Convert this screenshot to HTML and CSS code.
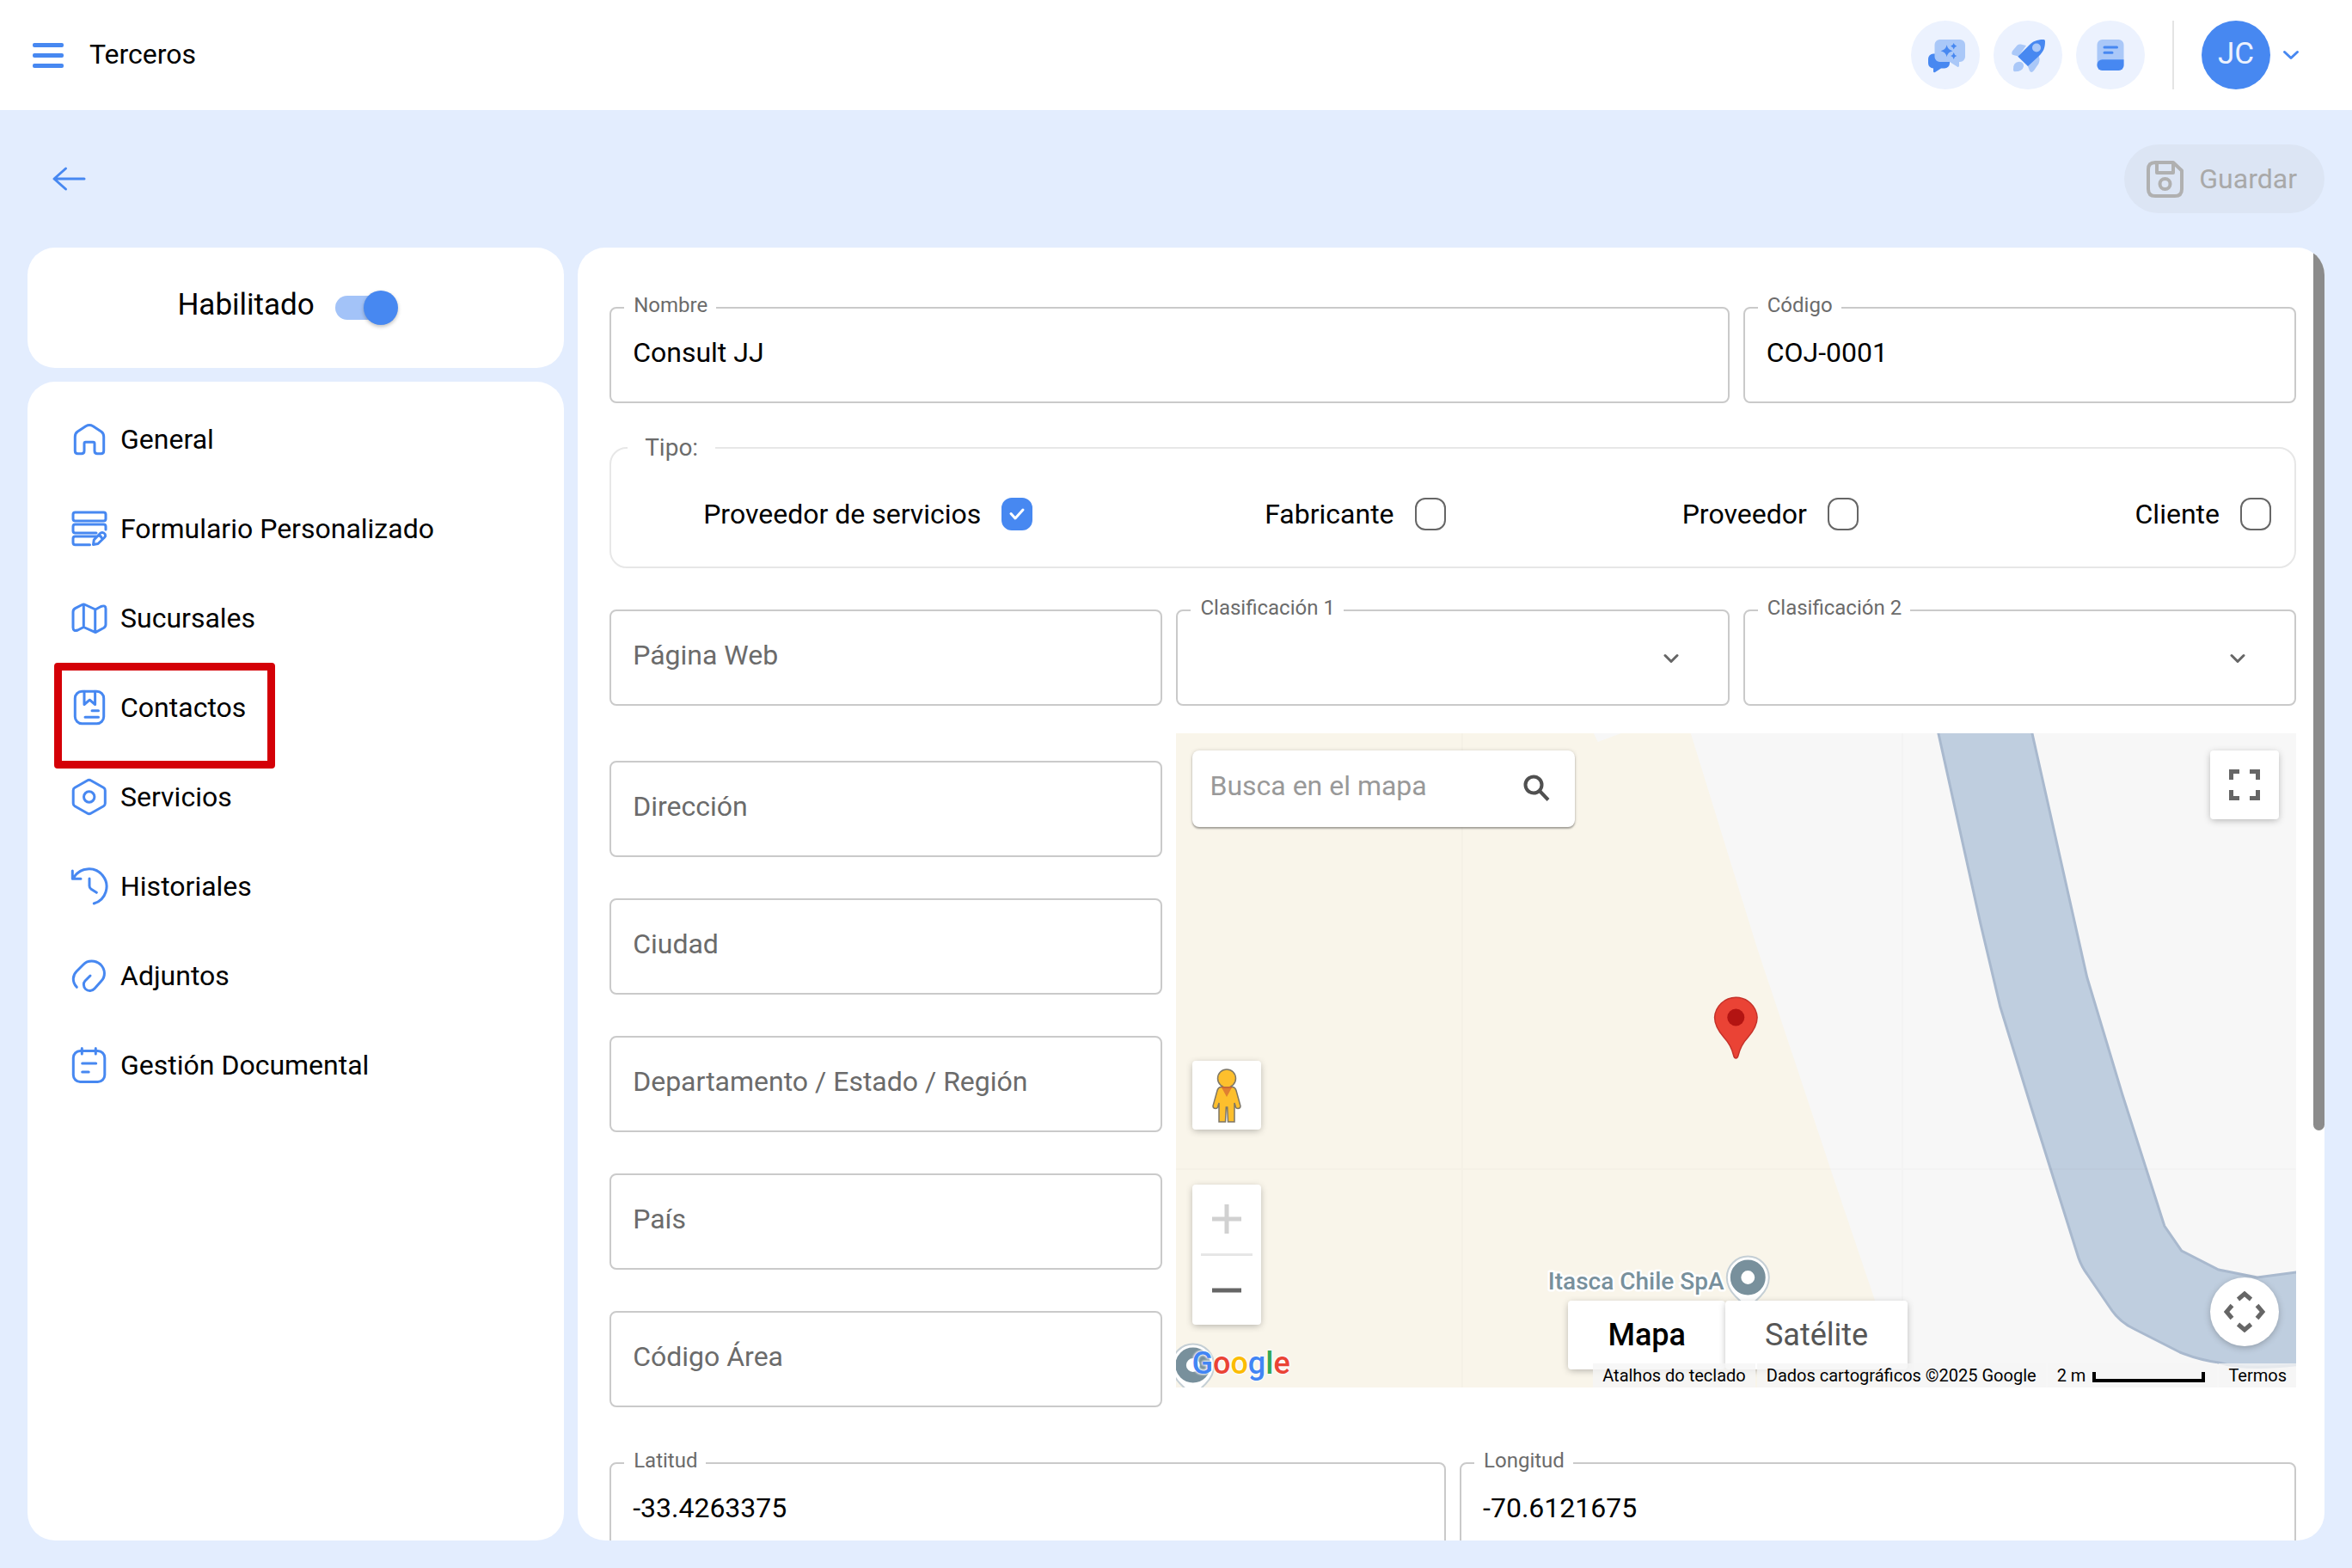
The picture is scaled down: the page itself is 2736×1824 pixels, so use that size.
FILE: index.html
```html
<!DOCTYPE html>
<html lang="es">
<head>
	<meta charset="utf-8">
	<title>Terceros</title>
	<link rel="stylesheet" href="styles.css">
</head>
<body>

<header class="topbar">
	<button class="menu-btn" aria-label="Menú"><span></span><span></span><span></span></button>
	<h1 class="title">Terceros</h1>
	<div class="actions">
		<button class="round" aria-label="Asistente">
			<svg viewBox="0 0 80 80">
				<path class="dark" d="M26 38.5h13a6 6 0 0 1 6 6v5a6 6 0 0 1-6 6h-4l-7 4.6q-2 .8-2-1.300v-3.300a6 6 0 0 1-6-6v-5a6 6 0 0 1 6-6z"/>
				<path class="light" d="M33.500 22h23.500a6 6 0 0 1 6 6v14a6 6 0 0 1-6 6h-1v4.500q-.3 2-2 1.300L45 48H33.500a6 6 0 0 1-6-6V28a6 6 0 0 1 6-6z"/>
				<path class="dark" d="M41.600 28.300q1.200 5.800 7 7-5.800 1.200-7 7-1.200-5.800-7-7 5.800-1.200 7-7zM49.700 26q.7 3 3.600 3.700-2.900.7-3.600 3.700-.7-3-3.600-3.700 2.900-.7 3.600-3.700zM49.700 37q.7 3.300 3.600 4-2.900.7-3.600 4-.7-3.300-3.600-4 2.900-.7 3.600-4z"/>
			</svg>
		</button>
		<button class="round" aria-label="Novedades">
			<svg viewBox="0 0 80 80">
				<path class="light" d="M38 29l-6.500-1.600q-2.500-.2-4 1.300l-5.500 6.500q-2 4 1 4.800l6 1.500zM52.500 40.500l1 4q.3 3-1 5.500l-5.500 8q-3 3.500-5 .5L39.500 52zM23 57q-.5-9 7-9.200 5.500.7 5 5.500-1 6-10.500 6-1.500 0-1.500-2.300z"/>
				<path class="dark" d="M58 22q2-.3 2 2c0 8-2 12-7 17L40 53 28.300 41.800 41 29c5-5 9-7 17-7z"/>
				<circle class="light" cx="50" cy="31.500" r="5"/>
			</svg>
		</button>
		<button class="round" aria-label="Manual">
			<svg viewBox="0 0 80 80">
				<rect class="light" x="24.500" y="22" width="31" height="36" rx="6"/>
				<path class="dark" d="M30.500 45.300h25V52a6 6 0 0 1-6 6h-19a6 6 0 0 1-6-6v-.7a6 6 0 0 1 6-6z"/>
				<path class="dark-line" d="M33 31h14.500M33 37.300h9"/>
			</svg>
		</button>
		<span class="divider"></span>
		<button class="user" aria-label="Cuenta">
			<span class="avatar">JC</span>
			<svg class="chevron" viewBox="0 0 32 32"><path d="M8.500 12.500l7.500 7 7.500-7"/></svg>
		</button>
	</div>
</header>

<main class="page">
	<div class="toolbar">
		<a class="back" href="#" aria-label="Volver">
			<svg viewBox="0 0 40 32"><path d="M3 16h35M16.500 4L3 16l13.500 12"/></svg>
		</a>
		<button class="save" disabled>
			<svg viewBox="0 0 43 43">
				<path d="M10 2h21l10 9.500V33q0 8-8 8H10q-8 0-8-8V10q0-8 8-8zM12 2v12h19V2"/>
				<circle cx="21.500" cy="27" r="6"/>
			</svg>
			Guardar
		</button>
	</div>

	<div class="columns">
		<aside class="side">
			<section class="card state">
				<label for="habilitado">Habilitado</label>
				<input type="checkbox" id="habilitado" class="switch" checked>
			</section>
			<nav class="card menu">
				<a href="#">
					<svg viewBox="0 0 48 48"><path d="M7.300 21q0-4 3-6l9.500-6.300q4.200-2.400 8.400 0l9.500 6.300q3 2 3 6v16.500q0 3.200-3.200 3.200h-4.300q-3.200 0-3.200-3.200V29q0-1.700-1.700-1.700h-8.600q-1.700 0-1.700 1.700v8.500q0 3.200-3.200 3.200h-4.300q-3.200 0-3.200-3.200z"/></svg>
					General
				</a>
				<a href="#">
					<svg viewBox="0 0 48 48"><rect x="5" y="5" width="38" height="10" rx="2.500"/><path d="M43 25v-3.500q0-2.500-2.500-2.500h-33Q5 19 5 21.500v5Q5 29 7.500 29H32M32 33H7.500Q5 33 5 35.500v4.700q0 2.500 2.500 2.500h17M28.500 42.500l.8-5.500 7.700-8q3.200-1.500 5.300 1.500.8 2-.6 3.500L34 41.500zM35 31.500q2.500 1 3.800 4"/></svg>
					Formulario Personalizado
				</a>
				<a href="#">
					<svg viewBox="0 0 48 48"><path d="M5 17q0-3 2.500-4.300L15.500 8.500q1.800-.8 3.600 0L31 14l6.500-3.500q5.500-2 5.500 2.500v18.500q0 2.500-2.500 4L31 40.600 17.300 34.500 10.500 38Q5 40 5 35zM17.300 8.500v26M30.700 14v26.500"/></svg>
					Sucursales
				</a>
				<a href="#" class="marked">
					<svg viewBox="0 0 48 48"><rect x="7.300" y="5.300" width="33.400" height="37.400" rx="8"/><path d="M18 5.300v15.200l6.300-5.300 6.300 5.300V5.300M27 27.700h7.500M19 35.300h15.500"/></svg>
					Contactos
				</a>
				<a href="#">
					<svg viewBox="0 0 48 48"><path d="M21.500 5q2.200-1.500 4.400 0l14.600 8.300q1.800 1 1.800 3.200v15q0 2.200-1.800 3.200L25.900 43q-2.200 1.500-4.400 0L7 34.700q-1.800-1-1.800-3.200v-15q0-2.200 1.800-3.200z"/><circle cx="23.700" cy="24" r="6.200"/></svg>
					Servicios
				</a>
				<a href="#">
					<svg viewBox="0 0 48 48"><path d="M5.500 14.500A20.500 20.500 0 1 1 29.300 44M4.300 6v9.300H14M24 15v8.500q0 2.500 2 3.800l6.300 4"/></svg>
					Historiales
				</a>
				<a href="#">
					<svg viewBox="0 0 48 48"><path d="M9.300 37.300C3.500 31 4.500 23.500 9 19l8-8c5-5.200 14-5.200 20 0 6 6 5.500 14.500 1 19l-8 9c-2.500 3-7.500 3.300-10.500.5-2.800-2.800-2.700-7.200-.5-9.500l6-6"/></svg>
					Adjuntos
				</a>
				<a href="#">
					<svg viewBox="0 0 48 48"><rect x="5.300" y="7.500" width="36.500" height="36" rx="8"/><path d="M15.300 4.500v6.500M31.300 4.500v6.500M15.700 22h16M15.700 32h7.500"/></svg>
					Gestión Documental
				</a>
			</nav>
		</aside>

		<section class="card panel">
			<form class="grid">
				<div class="field wide">
					<label for="nombre">Nombre</label>
					<input type="text" id="nombre" value="Consult JJ">
				</div>
				<div class="field">
					<label for="codigo">Código</label>
					<input type="text" id="codigo" value="COJ-0001">
				</div>

				<fieldset class="types">
					<legend>Tipo:</legend>
					<div class="options">
						<label>Proveedor de servicios <span class="tick"><input type="checkbox" checked><svg viewBox="0 0 36 36"><path d="M11 18.500l5 5.500 9-10"/></svg></span></label>
						<label>Fabricante <span class="tick"><input type="checkbox"></span></label>
						<label>Proveedor <span class="tick"><input type="checkbox"></span></label>
						<label>Cliente <span class="tick"><input type="checkbox"></span></label>
					</div>
				</fieldset>

				<div class="field">
					<input type="text" placeholder="Página Web" aria-label="Página Web">
				</div>
				<div class="field">
					<label for="clas1">Clasificación 1</label>
					<select id="clas1"></select>
					<svg class="arrow" viewBox="0 0 32 32"><path d="M9 12.500l7 7 7-7"/></svg>
				</div>
				<div class="field">
					<label for="clas2">Clasificación 2</label>
					<select id="clas2"></select>
					<svg class="arrow" viewBox="0 0 32 32"><path d="M9 12.500l7 7 7-7"/></svg>
				</div>

				<div class="address">
					<div class="field"><input type="text" placeholder="Dirección" aria-label="Dirección"></div>
					<div class="field"><input type="text" placeholder="Ciudad" aria-label="Ciudad"></div>
					<div class="field"><input type="text" placeholder="Departamento / Estado / Región" aria-label="Departamento / Estado / Región"></div>
					<div class="field"><input type="text" placeholder="País" aria-label="País"></div>
					<div class="field"><input type="text" placeholder="Código Área" aria-label="Código Área"></div>
				</div>

				<div class="map">
					<svg class="tiles" viewBox="0 0 1303 761" preserveAspectRatio="xMidYMid slice">
						<rect width="1303" height="761" fill="#f7f7f7"/>
						<path fill="#f9f5ea" d="M0 0H599L675 246 762 508 813 659 847 761H0z"/>
						<path fill="#f7f7f7" d="M486 0h32l-27 10z"/>
						<!-- river -->
						<path fill="#bfcedf" stroke="#a9b9ce" stroke-width="3" d="M886-5L936 221 959 318 995 435 1050 610Q1054 621 1060 629L1088 670Q1098 685 1115 693L1168 720Q1190 729 1213 732 1245 742 1310 734V626L1258 633 1213 624 1170 602 1150 573 1101 420 1060 284 995-5z"/>
						<!-- tile seams -->
						<path stroke="#000" stroke-opacity=".015" stroke-width="2" d="M333 0v761M845 0v761M0 507h1303"/>
						<!-- places -->
						<g>
							<path fill="#fff" stroke="#c5cfd5" stroke-width="2" d="M641 633a24.500 24.500 0 1 1 49 0q0 12-10 22l-14.500 14-14.500-14q-10-10-10-22z"/>
							<circle cx="665.500" cy="633" r="14.200" fill="#fff" stroke="#78909c" stroke-width="12.500"/>
							<path fill="#fff" stroke="#c5cfd5" stroke-width="2" d="M-4.500 735a24.500 24.500 0 1 1 49 0q0 12-10 22l-14.500 14-14.500-14q-10-10-10-22z"/>
							<circle cx="20" cy="735" r="14.200" fill="#fff" stroke="#78909c" stroke-width="12.500"/>
							<text class="place" x="433" y="647">Itasca Chile SpA</text>
						</g>
						<g>
							<path fill="#ea4335" stroke="#c5322a" stroke-width="1.500" d="M651.500 378q-2 0-2.700-3.500-3-12-11-20.500-11-12.500-11-23.500a24.800 24.800 0 0 1 49.500 0q0 11-11 23.500-8 8.500-11 20.500-.8 3.500-2.800 3.500z"/>
							<circle cx="651.500" cy="330.500" r="10" fill="#b31412"/>
						</g>
					</svg>

					<div class="search">
						<input type="text" placeholder="Busca en el mapa" aria-label="Busca en el mapa">
						<svg viewBox="0 0 32 32"><circle cx="12" cy="12" r="9.500"/><path d="M19 19l10 10.500"/></svg>
					</div>

					<button type="button" class="ctl fullscreen" aria-label="Pantalla completa">
						<svg viewBox="0 0 36 36"><path d="M2.500 12V2.500H12M24 2.500h9.500V12M33.500 24v9.500H24M12 33.500H2.500V24"/></svg>
					</button>

					<button type="button" class="ctl pegman" aria-label="Street View">
						<svg viewBox="0 0 36 63">
							<path fill="#fdbf2d" stroke="#7d7666" stroke-width="1.500" d="M11 21.500q-3 .5-4 4l-5 18q0 3 3 3 2 0 2.500-1.500l1.500-5V62h7.500l.8-17h1.400l.8 17H27V40l1.500 5q.5 1.500 2.500 1.500 3 0 3-3l-5-18q-1-3.500-4-4z"/>
							<path fill="#e07f31" d="M12 22h12l-6 11z"/>
							<circle cx="18" cy="11.500" r="10.500" fill="#fdbf2d" stroke="#7d7666" stroke-width="1.500"/>
							<path stroke="#d9622b" stroke-width="1.500" d="M12 22h12"/>
						</svg>
					</button>

					<div class="ctl zoom">
						<button type="button" aria-label="Acercar" disabled><svg viewBox="0 0 34 34"><path d="M17 0v34M0 17h34"/></svg></button>
						<button type="button" aria-label="Alejar"><svg viewBox="0 0 34 34"><path d="M0 17h34"/></svg></button>
					</div>

					<button type="button" class="ctl rotate" aria-label="Mover la cámara">
						<svg viewBox="0 0 48 48"><path d="M16.500 9.500L24 3l7.500 6.500M16.500 38.500L24 45l7.500-6.500M9.500 16.500L3 24l6.500 7.500M38.500 16.500L45 24l-6.500 7.500"/></svg>
					</button>

					<div class="maptype">
						<button type="button" class="on">Mapa</button>
						<button type="button">Satélite</button>
					</div>

					<a class="google" href="#"><span class="b">G</span><span class="r">o</span><span class="y">o</span><span class="b">g</span><span class="g">l</span><span class="r">e</span></a>

					<div class="legal">
						<button type="button">Atalhos do teclado</button>
						<span>Dados cartográficos ©2025 Google</span>
						<span class="scale">2 m <i></i></span>
						<a href="#">Termos</a>
					</div>
				</div>

				<div class="coords">
					<div class="field">
						<label for="latitud">Latitud</label>
						<input type="text" id="latitud" value="-33.4263375">
					</div>
					<div class="field">
						<label for="longitud">Longitud</label>
						<input type="text" id="longitud" value="-70.6121675">
					</div>
				</div>
			</form>
			<div class="scrollbar"></div>
		</section>
	</div>
</main>

</body>
</html>
```
FILE: styles.css
```css
*, *::before, *::after {
	box-sizing: border-box;
}
body {
	margin: 0;
	height: 100vh;
	display: flex;
	flex-direction: column;
	background: #e3edfe;
	color: #000;
	font-family: Roboto, "Liberation Sans", sans-serif;
	font-size: 32px;
}
button, input, select {
	font: inherit;
	color: inherit;
	margin: 0;
	padding: 0;
	border: none;
	background: none;
}
a {
	color: inherit;
	text-decoration: none;
}
svg {
	display: block;
	fill: none;
}

/* top bar */
.topbar {
	display: flex;
	align-items: center;
	height: 128px;
	padding: 0 55px 0 38px;
	background: #fff;
}
.menu-btn {
	display: flex;
	flex-direction: column;
	gap: 7px;
	width: 36px;
}
.menu-btn span {
	height: 5px;
	border-radius: 2px;
	background: #4788f1;
}
.title {
	margin: 0 0 0 30px;
	padding-bottom: 2px;
	font-size: 32px;
	font-weight: 400;
}
.actions {
	display: flex;
	align-items: center;
	gap: 16px;
	margin-left: auto;
}
.round {
	width: 80px;
	height: 80px;
	border-radius: 50%;
	background: #ecf2fe;
}
.dark {
	fill: #4788f1;
}
.light {
	fill: #aac8f8;
}
.dark-line {
	stroke: #4788f1;
	stroke-width: 3;
	stroke-linecap: round;
}
.divider {
	width: 2px;
	height: 80px;
	margin: 0 16px;
	background: #e4e4e4;
}
.user {
	display: flex;
	align-items: center;
	gap: 8px;
}
.avatar {
	width: 80px;
	height: 80px;
	border-radius: 50%;
	background: #4788f1;
	color: #ecf2fe;
	font-size: 35px;
	line-height: 77px;
	text-align: center;
}
.chevron {
	width: 32px;
	height: 32px;
	stroke: #4788f1;
	stroke-width: 3;
	stroke-linecap: round;
	stroke-linejoin: round;
}

/* page */
.page {
	flex: 1;
	min-height: 0;
	display: flex;
	flex-direction: column;
	padding: 40px 32px 32px;
}
.toolbar {
	display: flex;
	align-items: center;
	justify-content: space-between;
	margin-bottom: 40px;
	padding-left: 28px;
}
.back svg {
	width: 40px;
	height: 32px;
	stroke: #4788f1;
	stroke-width: 3;
	stroke-linecap: round;
	stroke-linejoin: round;
}
.save {
	display: flex;
	align-items: center;
	gap: 18px;
	height: 80px;
	padding: 0 32px 0 26px;
	border-radius: 40px;
	background: #dce5f4;
	color: #a9a9a9;
}
.save svg {
	width: 43px;
	height: 43px;
	stroke: #b0b0b0;
	stroke-width: 4;
	stroke-linejoin: round;
}
.columns {
	flex: 1;
	min-height: 0;
	display: grid;
	grid-template-columns: 235fr 765fr;
	gap: 16px;
}
.card {
	background: #fff;
	border-radius: 32px;
}

/* left column */
.side {
	display: flex;
	flex-direction: column;
	gap: 16px;
}
.state {
	display: flex;
	align-items: center;
	justify-content: center;
	gap: 24px;
	height: 140px;
	padding-right: 20px;
	font-size: 35px;
}
.state label {
	padding-bottom: 8px;
}
.switch {
	appearance: none;
	position: relative;
	width: 72px;
	height: 28px;
	border-radius: 14px;
	background: #a3c3f8;
}
.switch::before {
	content: "";
	position: absolute;
	top: -6px;
	right: -1px;
	width: 40px;
	height: 40px;
	border-radius: 50%;
	background: #4788f1;
	box-shadow: 0 2px 4px rgba(0, 0, 0, .25);
}
.menu {
	flex: 1;
	padding: 16px 24px 16px 48px;
}
.menu a {
	position: relative;
	display: flex;
	align-items: center;
	gap: 12px;
	height: 104px;
	padding-bottom: 2px;
}
.menu svg {
	width: 48px;
	height: 48px;
	stroke: #4788f1;
	stroke-width: 3;
	stroke-linecap: round;
	stroke-linejoin: round;
}
.marked::after {
	content: "";
	position: absolute;
	top: -1px;
	left: -17px;
	width: 257px;
	height: 123px;
	border: 9px solid #d40007;
	border-radius: 4px;
}

/* form */
.panel {
	position: relative;
	overflow: hidden;
	padding: 69px 33px 0 37px;
}
.scrollbar {
	position: absolute;
	top: 0;
	right: 0;
	width: 13px;
	height: 1027px;
	border-radius: 7px;
	background: #8b8b8b;
}
.grid {
	display: grid;
	grid-template-columns: repeat(3, 1fr);
	column-gap: 16px;
}
.wide {
	grid-column: span 2;
}
.field {
	position: relative;
	height: 112px;
}
.field input,
.field select {
	appearance: none;
	display: block;
	width: 100%;
	height: 100%;
	padding: 0 25px 6px;
	border: 2px solid #cacaca;
	border-radius: 8px;
	background: #fff;
}
.field input::placeholder {
	color: #6b6b6b;
	opacity: 1;
}
.field label {
	position: absolute;
	top: -16px;
	left: 17px;
	padding: 0 10px 0 11px;
	background: #fff;
	color: #6b6b6b;
	font-size: 24px;
	line-height: 28px;
}
.arrow {
	position: absolute;
	top: 41px;
	right: 52px;
	width: 32px;
	height: 32px;
	stroke: #666;
	stroke-width: 3;
	stroke-linecap: round;
	stroke-linejoin: round;
	pointer-events: none;
}
.types {
	grid-column: 1 / -1;
	min-width: 0;
	margin: 36px 0 48px;
	padding: 0 27px 0 10px;
	border: 2px solid #e7e7e7;
	border-radius: 20px;
}
.types legend {
	margin-left: 9px;
	padding: 0 20px;
	color: #6b6b6b;
	font-size: 28px;
	line-height: 32px;
}
.options {
	display: grid;
	grid-template-columns: repeat(4, 1fr);
	height: 122px;
}
.options label {
	display: flex;
	align-items: center;
	justify-content: flex-end;
	gap: 24px;
}
.tick {
	position: relative;
	width: 36px;
	height: 38px;
}
.tick input {
	appearance: none;
	display: block;
	width: 100%;
	height: 100%;
	border: 2px solid #666;
	border-radius: 12px;
}
.tick input:checked {
	border-color: #4788f1;
	background: #4788f1;
}
.tick svg {
	position: absolute;
	inset: 0;
	stroke: #fff;
	stroke-width: 3;
	stroke-linecap: round;
	stroke-linejoin: round;
}
.address {
	display: flex;
	flex-direction: column;
	gap: 48px;
	padding-top: 64px;
}
.coords {
	grid-column: 1 / -1;
	display: grid;
	grid-template-columns: 1fr 1fr;
	gap: 16px;
	margin-top: 64px;
}

/* map */
.map {
	grid-column: span 2;
	position: relative;
	overflow: hidden;
	height: 761px;
	margin-top: 32px;
	background: #f7f7f7;
}
.tiles {
	width: 100%;
	height: 100%;
}
.place {
	fill: #78909c;
	stroke: #fff;
	stroke-width: 5;
	stroke-linejoin: round;
	paint-order: stroke;
	font-size: 28px;
	font-weight: 500;
}
.search {
	position: absolute;
	top: 20px;
	left: 19px;
	display: flex;
	align-items: center;
	width: 445px;
	height: 89px;
	padding: 0 28px 8px 20px;
	border-radius: 8px;
	background: #fff;
	box-shadow: 0 2px 2px rgba(0, 0, 0, .3), 0 0 4px rgba(0, 0, 0, .15);
}
.search input {
	flex: 1;
	min-width: 0;
}
.search input::placeholder {
	color: #999;
	opacity: 1;
}
.search svg {
	width: 32px;
	height: 32px;
	margin-top: 6px;
	stroke: #505050;
	stroke-width: 4;
}
.ctl {
	position: absolute;
	display: flex;
	align-items: center;
	justify-content: center;
	width: 80px;
	height: 80px;
	border-radius: 4px;
	background: #fff;
	box-shadow: 0 2px 8px -1px rgba(0, 0, 0, .3);
}
.ctl svg {
	stroke: #666;
	stroke-width: 5;
}
.fullscreen {
	top: 20px;
	right: 20px;
}
.fullscreen svg {
	width: 36px;
	height: 36px;
}
.pegman {
	left: 19px;
	bottom: 300px;
}
.pegman svg {
	width: 36px;
	height: 63px;
	stroke: none;
}
.zoom {
	left: 19px;
	bottom: 73px;
	flex-direction: column;
	height: 163px;
	padding: 0 10px;
}
.zoom button {
	flex: 1;
	display: flex;
	align-items: center;
	justify-content: center;
	width: 60px;
}
.zoom button + button {
	border-top: 3px solid #e6e6e6;
}
.zoom svg {
	width: 34px;
	height: 34px;
}
.zoom button:disabled svg {
	stroke: #d1d1d1;
}
.rotate {
	right: 20px;
	bottom: 48px;
	border-radius: 50%;
}
.rotate svg {
	width: 48px;
	height: 48px;
}
.maptype {
	position: absolute;
	left: 456px;
	bottom: 21px;
	display: flex;
	height: 80px;
	font-size: 36px;
}
.maptype button {
	padding: 0 46px;
	border-radius: 4px;
	background: #fff;
	box-shadow: 0 2px 8px -1px rgba(0, 0, 0, .3);
	color: #565656;
}
.maptype .on {
	color: #000;
	font-weight: 500;
}
.google {
	position: absolute;
	left: 18px;
	bottom: 6px;
	font-size: 36px;
	font-weight: 500;
	line-height: 44px;
	text-shadow: 0 0 3px #fff, 0 0 3px #fff, 0 0 3px #fff;
}
.google .b { color: #4285f4; }
.google .r { color: #ea4335; }
.google .y { color: #fbbc05; }
.google .g { color: #34a853; }
.legal {
	position: absolute;
	right: 0;
	bottom: 0;
	display: flex;
	gap: 2px;
	font-size: 20px;
	line-height: 28px;
}
.legal > * {
	padding: 0 11px;
	background: rgba(245, 245, 245, .8);
}
.legal .scale {
	display: flex;
	gap: 8px;
}
.scale i {
	width: 131px;
	height: 12px;
	margin-top: 10px;
	margin-right: 3px;
	border: 4px solid #000;
	border-top: none;
}
```
